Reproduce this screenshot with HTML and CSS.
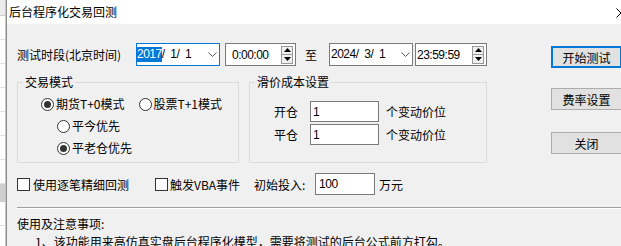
FILE: index.html
```html
<!DOCTYPE html>
<html lang="zh-CN">
<head>
<meta charset="utf-8">
<title>后台程序化交易回测</title>
<link rel="stylesheet" href="styles.css">
</head>
<body>
<div class="screen">
  <div class="bgwin">
    <div class="bg-head"></div>
    <div class="bg-rows"></div>
    <div class="bg-sel"></div>
    <div class="bg-rows short"></div>
  </div>
  <div class="dialog">
    <div class="titlebar">
      <span class="title">后台程序化交易回测</span>
      <span class="close"><svg width="10" height="10" viewBox="0 0 10 10"><path d="M0.5 0.5 L9.5 9.5 M9.5 0.5 L0.5 9.5" stroke="#000" stroke-width="1" fill="none"/></svg></span>
    </div>
    <div class="body">
      <div class="top">
        <div class="main">
          <div class="row1">
            <span class="lbl-period">测试时段(北京时间)</span>
            <div class="datebox focused">
              <span class="dtext"><span class="sel">2017</span>/ &nbsp;1/ &nbsp;1</span>
              <svg class="chev" width="9" height="5" viewBox="0 0 9 5"><path d="M0.5 0.5 L4.5 4.5 L8.5 0.5" stroke="#555" stroke-width="1" fill="none"/></svg>
            </div>
            <div class="timebox">
              <span class="ttext">0:00:00</span>
              <div class="spin">
                <div class="spin-half"><svg width="7" height="4" viewBox="0 0 7 4"><path d="M0 4 L3.5 0 L7 4 Z" fill="#000"/></svg></div>
                <div class="spin-half"><svg width="7" height="4" viewBox="0 0 7 4"><path d="M0 0 L7 0 L3.5 4 Z" fill="#000"/></svg></div>
              </div>
            </div>
            <span class="to">至</span>
            <div class="datebox">
              <span class="dtext">2024/ &nbsp;3/ &nbsp;1</span>
              <svg class="chev" width="9" height="5" viewBox="0 0 9 5"><path d="M0.5 0.5 L4.5 4.5 L8.5 0.5" stroke="#555" stroke-width="1" fill="none"/></svg>
            </div>
            <div class="timebox t2">
              <span class="ttext">23:59:59</span>
              <div class="spin">
                <div class="spin-half"><svg width="7" height="4" viewBox="0 0 7 4"><path d="M0 4 L3.5 0 L7 4 Z" fill="#000"/></svg></div>
                <div class="spin-half"><svg width="7" height="4" viewBox="0 0 7 4"><path d="M0 0 L7 0 L3.5 4 Z" fill="#000"/></svg></div>
              </div>
            </div>
          </div>

          <div class="groups">
            <fieldset class="group g1">
              <legend>交易模式</legend>
              <div class="radio-row r1">
                <label class="radio"><span class="dot checked"></span><span>期货T+0模式</span></label>
                <label class="radio second"><span class="dot"></span><span>股票T+1模式</span></label>
              </div>
              <div class="radio-row sub">
                <label class="radio"><span class="dot"></span><span>平今优先</span></label>
              </div>
              <div class="radio-row sub">
                <label class="radio"><span class="dot checked"></span><span>平老仓优先</span></label>
              </div>
            </fieldset>
            <fieldset class="group g2">
              <legend>滑价成本设置</legend>
              <div class="slip-row first">
                <span class="slip-lbl">开仓</span>
                <span class="field slip">1</span>
                <span class="unit">个变动价位</span>
              </div>
              <div class="slip-row">
                <span class="slip-lbl">平仓</span>
                <span class="field slip">1</span>
                <span class="unit">个变动价位</span>
              </div>
            </fieldset>
          </div>

          <div class="row3">
            <span class="cb"></span><span class="cb-text">使用逐笔精细回测</span>
            <span class="cb second"></span><span class="cb-text">触发VBA事件</span>
            <span class="init-lbl">初始投入:</span>
            <span class="field init">100</span>
            <span class="wan">万元</span>
          </div>
        </div>

        <div class="buttons">
          <div class="btn default">开始测试</div>
          <div class="btn">费率设置</div>
          <div class="btn">关闭</div>
        </div>
      </div>

      <div class="sep"></div>

      <div class="notes">
        <div class="note-head">使用及注意事项:</div>
        <div class="note-line">1、该功能用来高仿真实盘后台程序化模型，需要将测试的后台公式前方打勾。</div>
      </div>
    </div>
  </div>
</div>
</body>
</html>
```

FILE: styles.css
```css
* { box-sizing: border-box; }
html, body {
  margin: 0;
  padding: 0;
  width: 621px;
  height: 246px;
  overflow: hidden;
  background: #f0f0f0;
}
body {
  font-family: "Noto Sans CJK SC", "Microsoft YaHei", sans-serif;
  font-size: 12px;
  color: #000;
}
.screen {
  display: flex;
  width: 621px;
  height: 246px;
}

/* background window strip */
.bgwin {
  width: 6px;
  flex: none;
  background: #fff;
  border-right: 1px solid #c8c8c8;
  display: flex;
  flex-direction: column;
}
.bg-head {
  height: 16px;
  background: #ececec;
  border-bottom: 1px solid #d0d0d0;
}
.bg-rows {
  height: 168px;
  background: repeating-linear-gradient(to bottom, #fff 0, #fff 23px, #e2e2e2 23px, #e2e2e2 24px);
}
.bg-sel {
  height: 18px;
  background: #cfcfcf;
}
.bg-rows.short {
  flex: 1;
}

/* dialog */
.dialog {
  flex: 1;
  min-width: 0;
  border-left: 1px solid #8c8c8c;
  display: flex;
  flex-direction: column;
  background: #f0f0f0;
}
.titlebar {
  height: 24px;
  background: #fff;
  display: flex;
  align-items: center;
  padding-left: 2px;
  flex: none;
}
.title {
  line-height: 16px;
}
.close {
  margin-left: auto;
  margin-right: -5px;
  display: flex;
  margin-top: 1px;
}
.body {
  flex: 1;
  padding: 19px 0 0 10px;
  overflow: hidden;
}
.top {
  display: flex;
}
.main {
  width: 470px;
  flex: none;
}

/* row 1 */
.row1 {
  display: flex;
  align-items: center;
  height: 23px;
}
.lbl-period {
  width: 119px;
  flex: none;
}
.datebox, .timebox {
  height: 23px;
  background: #fff;
  border: 1px solid #7a7a7a;
  display: flex;
  align-items: center;
  font-family: "Liberation Sans", Arial, sans-serif;
  letter-spacing: -0.5px;
  flex: none;
}
.datebox {
  width: 84px;
  padding-left: 0;
}
.datebox.focused {
  border-color: #0078d7;
}
.dtext {
  white-space: nowrap;
  line-height: 15px;
}
.datebox:not(.focused) .dtext {
  padding-left: 1px;
}
.sel {
  background: #0078d7;
  color: #fff;
  display: inline-block;
  line-height: 15px;
  padding-right: 0;
}
.chev {
  margin-left: auto;
  margin-right: 2px;
  flex: none;
}
.timebox {
  width: 71px;
  margin-left: 5px;
  padding-left: 6px;
}
.timebox.t2 {
  width: 72px;
  margin-left: 2px;
  padding-left: 1px;
}
.ttext {
  white-space: nowrap;
}
.spin {
  margin-left: auto;
  margin-right: 2px;
  width: 12px;
  height: 18px;
  border: 1px solid #9a9a9a;
  display: flex;
  flex-direction: column;
  background: #f0f0f0;
}
.spin-half {
  flex: 1;
  display: flex;
  align-items: center;
  justify-content: center;
}
.spin-half + .spin-half {
  border-top: 1px solid #9a9a9a;
}
.to {
  margin-left: 9px;
  margin-right: 12px;
}

/* group boxes */
.groups {
  display: flex;
  margin-top: 9px;
}
.group {
  margin: 0;
  padding: 0;
  border: 1px solid #dcdcdc;
  height: 88px;
  min-width: 0;
}
.group legend {
  margin-left: 5px;
  padding: 0 2px;
  line-height: 14px;
}
.g1 {
  width: 223px;
}
.g2 {
  width: 239px;
  margin-left: 10px;
}
.radio-row {
  display: flex;
  height: 16px;
  align-items: center;
  margin-top: 6px;
  padding-left: 39px;
}
.radio-row.r1 {
  margin-top: 7px;
  padding-left: 23px;
}
.radio {
  display: flex;
  align-items: center;
  line-height: 16px;
}
.radio.second {
  margin-left: 14px;
}
.dot {
  width: 13px;
  height: 13px;
  border-radius: 50%;
  border: 1px solid #333;
  background: #fff;
  margin-right: 2px;
  display: flex;
  align-items: center;
  justify-content: center;
  flex: none;
}
.dot.checked::after {
  content: "";
  width: 7px;
  height: 7px;
  border-radius: 50%;
  background: #333;
}
.slip-row {
  display: flex;
  align-items: center;
  padding-left: 24px;
  margin-top: 2px;
}
.slip-row.first {
  margin-top: 12px;
}
.slip-lbl {
  width: 36px;
  flex: none;
}
.field {
  background: #fff;
  border: 1px solid #7a7a7a;
  display: flex;
  align-items: center;
  font-family: "Liberation Sans", Arial, sans-serif;
  letter-spacing: -0.5px;
  flex: none;
}
.field.slip {
  width: 69px;
  height: 21px;
  padding-left: 2px;
}
.unit {
  margin-left: 7px;
}

/* row 3 */
.row3 {
  display: flex;
  align-items: center;
  height: 22px;
  margin-top: 10px;
}
.cb {
  width: 13px;
  height: 13px;
  border: 1px solid #333;
  background: #fff;
  flex: none;
  margin-right: 3px;
}
.cb.second {
  margin-left: 26px;
  margin-right: 2px;
}
.init-lbl {
  margin-left: 14px;
  width: 61px;
  flex: none;
}
.field.init {
  width: 60px;
  height: 22px;
  padding-left: 3px;
}
.wan {
  margin-left: 4px;
}

/* buttons */
.buttons {
  margin-left: 64px;
  display: flex;
  flex-direction: column;
  padding-top: 3px;
}
.btn {
  width: 71px;
  height: 22px;
  background: #e1e1e1;
  border: 1px solid #adadad;
  display: flex;
  align-items: center;
  justify-content: center;
  flex: none;
}
.btn + .btn {
  margin-top: 20px;
}
.btn + .btn + .btn {
  margin-top: 22px;
}
.btn.default {
  border-color: #0078d7;
  box-shadow: inset 0 0 0 1px #0078d7;
}

/* separator + notes */
.sep {
  margin-top: 12px;
  height: 2px;
  border-top: 1px solid #a0a0a0;
  border-bottom: 1px solid #fff;
}
.notes {
  margin-top: 6px;
}
.note-head, .note-line {
  line-height: 18px;
  white-space: nowrap;
}
.note-line {
  padding-left: 18px;
}
```
